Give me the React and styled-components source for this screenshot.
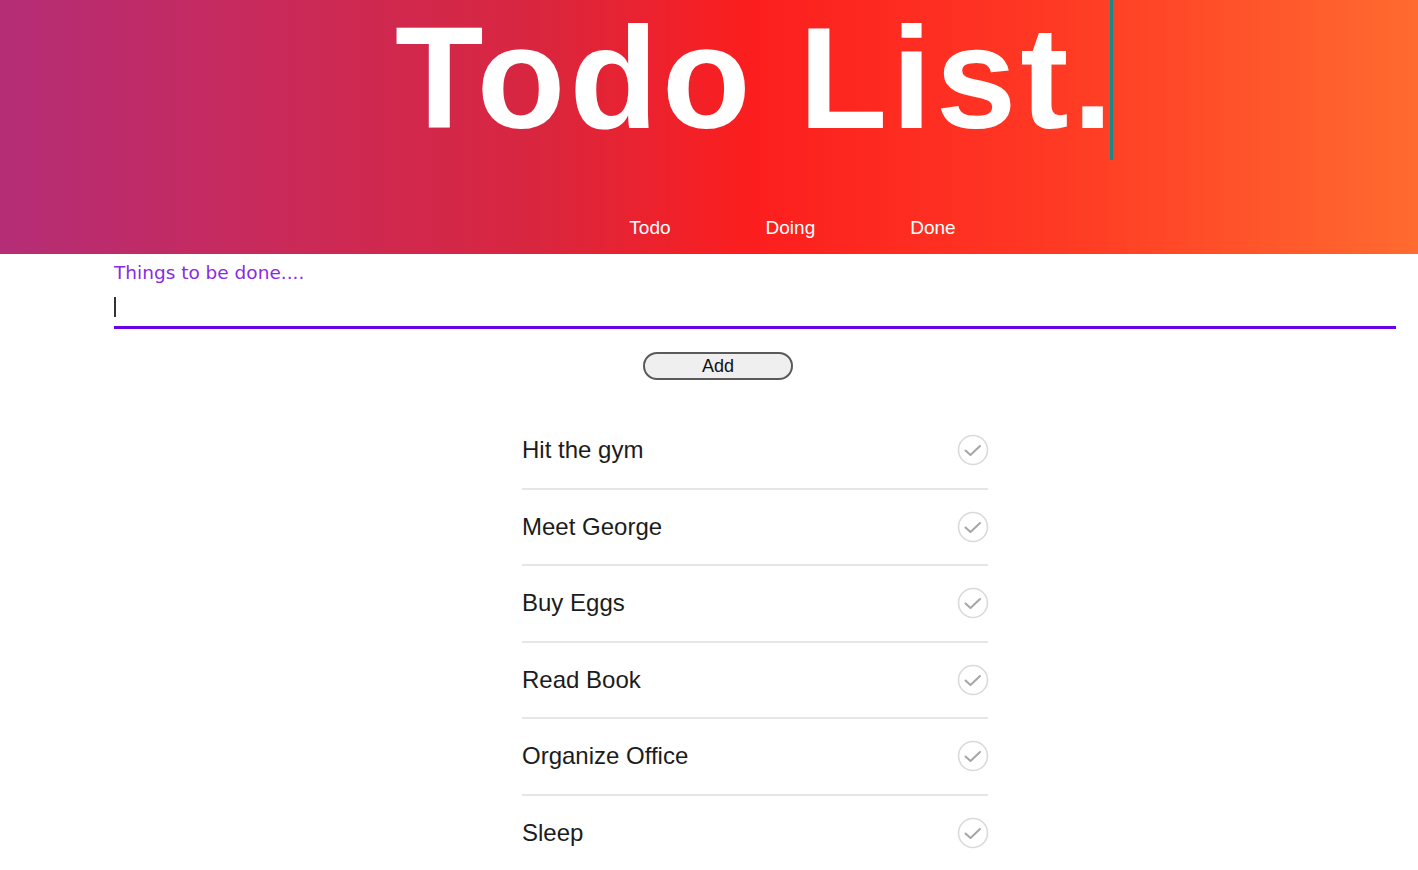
import React from 'react';
import styled, { createGlobalStyle } from 'styled-components';

const GlobalStyle = createGlobalStyle`
	html, body {
		margin: 0;
		padding: 0;
		background: #ffffff;
		font-family: "Liberation Sans", Arial, sans-serif;
	}
`;

const Page = styled.div`
	width: 1418px;
	min-height: 870px;
	overflow: hidden;
`;

const Header = styled.header`
	height: 254px;
	background-image: linear-gradient(
		to right,
		#b42d76 0%,
		#c82a5c 18%,
		#d9263f 38%,
		#fc1e1e 53%,
		#ff3a24 75%,
		#ff6b30 100%
	);
	display: flex;
	flex-direction: column;
`;

const TitleRow = styled.div`
	display: flex;
	padding-left: 395px;
`;

const Title = styled.h1`
	display: flex;
	margin: 0;
	height: 160px;
	box-sizing: border-box;
	padding-bottom: 4px;
	line-height: 156px;
	font-size: 145px;
	font-weight: bold;
	letter-spacing: 4px;
	color: #ffffff;
	white-space: nowrap;
`;

const TypingCursor = styled.span`
	align-self: flex-start;
	width: 3px;
	height: 160px;
	margin-left: -7px;
	background: #17898a;
`;

const Nav = styled.nav`
	display: flex;
	justify-content: center;
	gap: 95px;
	padding: 57px 0 0 167px;
`;

const NavLink = styled.a`
	font-size: 19px;
	line-height: 22px;
	color: #ffffff;
	text-decoration: none;
	cursor: pointer;
`;

const Form = styled.form`
	display: flex;
	flex-direction: column;
	padding: 8px 22px 0 114px;
`;

const Label = styled.label`
	font-family: "DejaVu Sans", "Liberation Sans", sans-serif;
	font-size: 18.5px;
	line-height: 22px;
	color: #8a2be2;
`;

const Field = styled.div`
	position: relative;
`;

const Input = styled.input`
	display: block;
	width: 100%;
	box-sizing: border-box;
	height: 45px;
	padding: 0 0 0 1px;
	border: none;
	border-bottom: 3px solid #6a00e6;
	outline: none;
	background: transparent;
	font-size: 20px;
	font-family: inherit;
	caret-color: transparent;
`;

const Caret = styled.span`
	position: absolute;
	left: 0;
	top: 13px;
	width: 2px;
	height: 20px;
	background: #333;
	pointer-events: none;
`;

const AddButton = styled.button`
	align-self: flex-start;
	margin: 23px 0 0 529px;
	width: 150px;
	height: 28px;
	border: 2px solid #5a5a5a;
	border-radius: 14px;
	background: #efefef;
	font-family: inherit;
	font-size: 18px;
	line-height: 20px;
	color: #111;
	padding: 0;
	cursor: pointer;
`;

const List = styled.ul`
	list-style: none;
	margin: 33px 0 0 522px;
	padding: 0;
	width: 466px;
`;

const Item = styled.li`
	display: flex;
	align-items: center;
	justify-content: space-between;
	height: 74.5px;
	border-bottom: 2px solid ${p => (p.$last ? 'transparent' : '#e6e6e6')};
`;

const ItemText = styled.span`
	font-size: 24px;
	color: #1c1c1c;
`;

const CheckButton = styled.button`
	display: flex;
	width: 32px;
	height: 32px;
	padding: 0;
	margin-right: -1px;
	border: none;
	background: none;
	cursor: pointer;
`;

const CheckIcon = () => (
	<svg width="32" height="32" viewBox="0 0 32 32" fill="none">
		<circle cx="16" cy="16" r="14.5" stroke="#dadada" strokeWidth="1.6" />
		<path d="M8.5 16.5 L13.5 21 L23 12" stroke="#a6a6a6" strokeWidth="2" strokeLinecap="round" strokeLinejoin="round" />
	</svg>
);

const todos = ['Hit the gym', 'Meet George', 'Buy Eggs', 'Read Book', 'Organize Office', 'Sleep'];

const App = () => (
	<Page>
		<GlobalStyle />
		<Header>
			<TitleRow>
				<Title>
					Todo List.
					<TypingCursor />
				</Title>
			</TitleRow>
			<Nav>
				<NavLink>Todo</NavLink>
				<NavLink>Doing</NavLink>
				<NavLink>Done</NavLink>
			</Nav>
		</Header>
		<Form onSubmit={e => e.preventDefault()}>
			<Label htmlFor="todo">Things to be done....</Label>
			<Field>
				<Input id="todo" />
				<Caret />
			</Field>
			<AddButton type="submit">Add</AddButton>
		</Form>
		<List>
			{todos.map((t, i) => (
				<Item key={t} $last={i === todos.length - 1}>
					<ItemText>{t}</ItemText>
					<CheckButton aria-label="done">
						<CheckIcon />
					</CheckButton>
				</Item>
			))}
		</List>
	</Page>
);

export default App;
